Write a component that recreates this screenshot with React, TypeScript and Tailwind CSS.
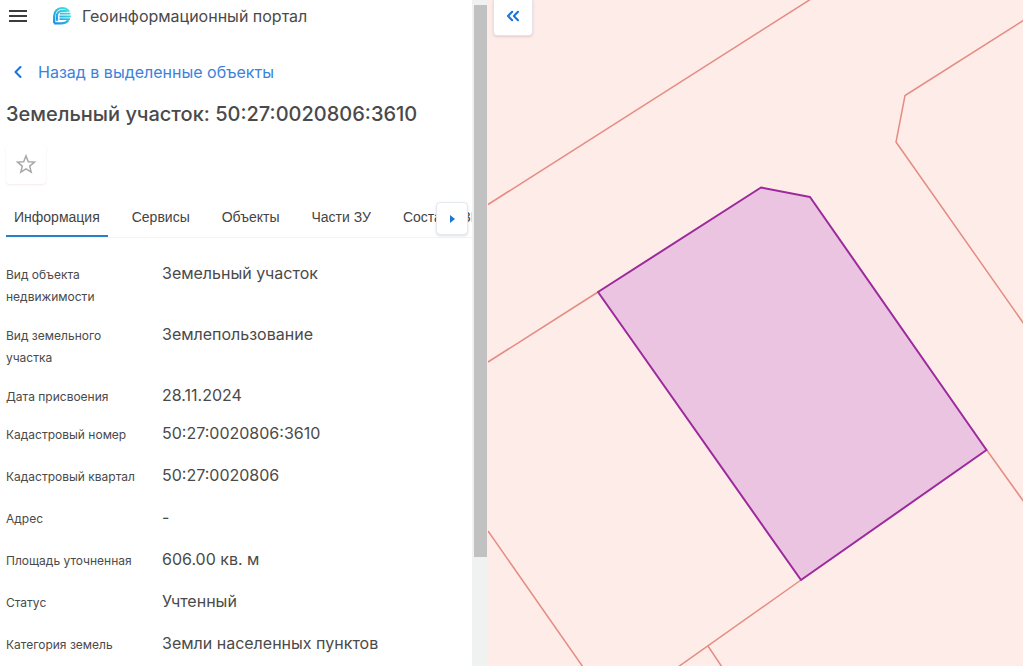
import { useState } from "react";
import { ChevronLeft, ChevronsLeft } from "lucide-react";

const TABS = ["Информация", "Сервисы", "Объекты", "Части ЗУ", "Состав ЕЗП"];

const FIELDS = [
  { label: "Вид объекта недвижимости", value: "Земельный участок", gap: "pb-[17px]" },
  { label: "Вид земельного участка", value: "Землепользование", gap: "pb-[17px]" },
  { label: "Дата присвоения", value: "28.11.2024", gap: "pb-4" },
  { label: "Кадастровый номер", value: "50:27:0020806:3610", gap: "pb-5" },
  { label: "Кадастровый квартал", value: "50:27:0020806", gap: "pb-5" },
  { label: "Адрес", value: "-", gap: "pb-5" },
  { label: "Площадь уточненная", value: "606.00 кв. м", gap: "pb-5" },
  { label: "Статус", value: "Учтенный", gap: "pb-5" },
  { label: "Категория земель", value: "Земли населенных пунктов", gap: "pb-5" },
];

function Logo() {
  return (
    <svg viewBox="0 0 20 20" className="w-5 h-5" fill="none" aria-hidden="true">
      <defs>
        <linearGradient id="logo" gradientUnits="userSpaceOnUse" x1="2" y1="17" x2="14" y2="3">
          <stop offset="0" stopColor="#1b8be6" />
          <stop offset="1" stopColor="#3fdcdf" />
        </linearGradient>
      </defs>
      <path
        d="M2.200 17.300V10c0-4.800 3.400-8 7.800-8 3.100 0 5.700 1.400 7 3.700M2.200 17.300h7.600c3 0 5.200-1 6.600-3.100"
        stroke="url(#logo)"
        strokeWidth="2.200"
      />
      <path
        d="M5 14.800v-4.600C5 7 7.200 4.900 10.200 4.900h5"
        stroke="url(#logo)"
        strokeWidth="2.200"
      />
      <path d="M8 7.700h10.500M7.500 10.500h11.200M7.500 13.200h10.500" stroke="url(#logo)" strokeWidth="1.800" />
    </svg>
  );
}

function Header() {
  return (
    <header className="flex items-center h-8 pl-2 shrink-0">
      <button aria-label="Меню" className="w-5 h-5 flex items-center justify-center">
        <svg viewBox="0 0 20 20" className="w-5 h-5" aria-hidden="true">
          <path d="M1 5h18M1 10h18M1 15h18" stroke="#3c3c3c" strokeWidth="2" />
        </svg>
      </button>
      <a href="#" className="flex items-center gap-2.5 ml-6 text-base text-[#4a4a4a]">
        <Logo />
        Геоинформационный портал
      </a>
    </header>
  );
}

function Tabs() {
  const [active, setActive] = useState(TABS[0]);

  return (
    <div className="relative mt-3 ml-1.5 shrink-0">
      <div role="tablist" className="flex gap-4 overflow-hidden border-b border-[#f2f4f6]">
        {TABS.map((t) => (
          <button
            key={t}
            role="tab"
            aria-selected={t === active}
            onClick={() => setActive(t)}
            className={`h-[41px] px-2 pt-0.5 font-['Liberation_Sans',sans-serif] text-sm whitespace-nowrap shrink-0 border-b-2 text-[#444] ${
              t === active ? "border-[#2b7fc7]" : "border-transparent"
            }`}
          >
            {t}
          </button>
        ))}
      </div>
      <button
        aria-label="Следующие вкладки"
        className="absolute right-1 top-1.5 w-8 h-[33px] flex items-center justify-center rounded bg-white border border-[#e4e9f0] shadow-sm"
      >
        <svg viewBox="0 0 6 8" className="w-1.5 h-2" aria-hidden="true">
          <path d="M1 0v8l5-4Z" fill="#1976d8" />
        </svg>
      </button>
    </div>
  );
}

function Details() {
  return (
    <table className="mt-[26px] ml-1.5 table-fixed text-left text-[#4a4a4a]">
      <tbody>
        {FIELDS.map((f) => (
          <tr key={f.label} className="align-top">
            <th scope="row" className={`w-[156px] pr-5 text-xs leading-[22px] font-normal ${f.gap}`}>
              {f.label}
            </th>
            <td className="text-base leading-[18px]">{f.value}</td>
          </tr>
        ))}
      </tbody>
    </table>
  );
}

function Map() {
  return (
    <main className="relative flex-1 min-w-0 bg-[#feece8]">
      <svg
        viewBox="488 0 535 666"
        preserveAspectRatio="xMidYMid slice"
        className="w-full h-full"
        fill="none"
        role="img"
        aria-label="Карта участков"
      >
        <g stroke="#e48c83" strokeWidth="1.500">
          <path d="M488 204.500 811 -1" />
          <path d="M1024 20 905 95.500 896 142 1024 324" />
          <path d="M488 362 598 292" />
          <path d="M986 449 1024 502" />
          <path d="M488 531 583 667" />
          <path d="M801 580 678 667" />
          <path d="M708 646 722 667" />
        </g>
        <path
          d="M598 292 761 187.500 810 197 986.500 450 801 580Z"
          fill="#eac4e0"
          stroke="#9c2a9c"
          strokeWidth="2"
          strokeLinejoin="round"
        />
      </svg>
      <button
        aria-label="Свернуть панель"
        className="absolute left-[5px] top-0 w-10 h-9 pb-1 flex items-center justify-center rounded-b bg-white border border-t-0 border-[#e6e2ea] shadow-sm"
      >
        <ChevronsLeft className="w-5 h-5 text-[#1976d8]" strokeWidth={2.5} />
      </button>
    </main>
  );
}

export default function App() {
  return (
    <div className="flex h-screen overflow-hidden bg-white font-['Inter',sans-serif]">
      <aside className="flex w-[472px] shrink-0 flex-col overflow-hidden">
        <Header />
        <a href="#" className="flex items-center gap-2.5 mt-7 ml-2 h-6 text-base text-[#3b82dc] shrink-0">
          <ChevronLeft className="w-5 h-5 text-[#1976d8]" strokeWidth={2.5} />
          Назад в выделенные объекты
        </a>
        <h1 className="mt-4 ml-1.5 text-xl leading-7 font-medium text-[#4a4a4a]">
          Земельный участок: 50:27:0020806:3610
        </h1>
        <button
          aria-label="В избранное"
          className="mt-4 ml-1.5 w-10 h-10 flex items-center justify-center rounded shadow-[0_1px_2px_#f3ebe8] shrink-0"
        >
          <svg viewBox="0 0 24 24" className="w-6 h-6" fill="none" aria-hidden="true">
            <path
              d="M12 3.800 14.300 9.700 20.500 10.100 15.700 14.100 17.200 20.200 12 16.900 6.800 20.200 8.300 14.100 3.500 10.100 9.700 9.700Z"
              stroke="#a8a8a8"
              strokeWidth="1.500"
            />
          </svg>
        </button>
        <Tabs />
        <Details />
      </aside>
      <div className="w-4 shrink-0 bg-[#f0f1f1] pl-0.5 pr-px pt-[5px]" aria-hidden="true">
        <div className="h-[83.5%] bg-[#c1c1c1]" />
      </div>
      <Map />
    </div>
  );
}
